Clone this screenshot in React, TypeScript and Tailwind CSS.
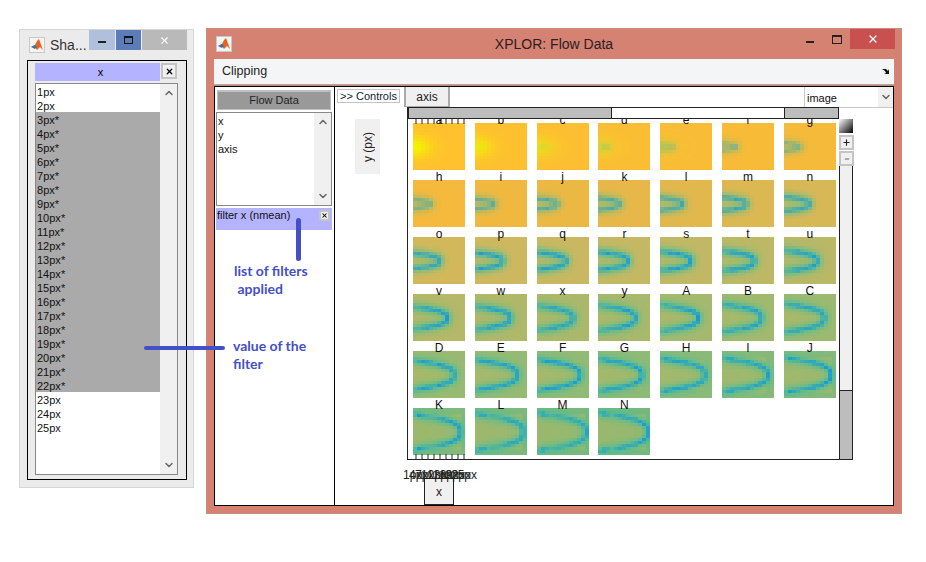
import { useMemo } from 'react'
import { ChevronDown, ChevronUp, Minus, Plus, X } from 'lucide-react'

const rowLabels = Array.from({ length: 25 }, (_, i) => i + 1)
const frameLabels = 'abcdefghijklmnopqrstuvwxyABCDEFGHIJKLMN'.split('')
const tickLabels = ['1px', '4px', '7px', '10px', '13px', '16px', '19px', '22px', '25px']

type Rgb = [number, number, number]

const baseStops: Rgb[] = [
  [255, 193, 45],
  [243, 184, 62],
  [204, 184, 96],
  [172, 184, 106],
  [144, 186, 118],
  [116, 184, 126]
]

function mix(a: Rgb, b: Rgb, k: number): Rgb {
  return [a[0] + (b[0] - a[0]) * k, a[1] + (b[1] - a[1]) * k, a[2] + (b[2] - a[2]) * k]
}

function heatColor(index: number, x: number, y: number): string {
  const t = index / 38
  const pos = t * (baseStops.length - 1)
  const low = Math.min(Math.floor(pos), baseStops.length - 2)
  let color = mix(baseStops[low], baseStops[low + 1], pos - low)

  const tip = 3 + 47 * Math.pow(t, 0.7)
  const half = 1 + 18 * t
  const dy = Math.abs(y - 24)
  let dist = 999
  for (let s = 0; s <= 24; s++) {
    const v = s / 24
    const cx = tip * (1 - v * v * v)
    const cy = half * v
    dist = Math.min(dist, Math.hypot(x - cx, dy - cy))
  }

  // inside of the front stays olive, outside turns green with time
  if (x < tip && dy < half) color = mix(color, [176, 184, 100], Math.min(1, t * 1.4) * 0.6)
  const noise = (Math.sin(x * 12.9 + dy * 78.2 + index * 37.7) * 43758.5) % 1
  const strength = Math.min(1, 0.05 + t * 2.2)
  color = mix(color, [72, 192, 150], Math.exp(-(dist * dist) / 30) * strength * 0.8)
  color = mix(color, [20, 152, 220], Math.exp(-(dist * dist) / 4) * strength * (0.6 + Math.abs(noise) * 0.35))

  if (index < 5) {
    const glow = Math.exp(-((x * x) / 320 + (dy * dy) / 110)) * (1 - index / 5)
    color = mix(color, [244, 244, 0], glow)
  }
  return `rgb(${color.map(Math.round).join(',')})`
}

function HeatThumb({ index }: { index: number }) {
  const cells = useMemo(() => {
    const list: { x: number; y: number; fill: string }[] = []
    for (let x = 0; x < 52; x += 4) {
      for (let y = 0; y < 47; y += 3) {
        list.push({ x, y, fill: heatColor(index, x + 2, y + 1.5) })
      }
    }
    return list
  }, [index])

  return (
    <svg width="52" height="47" viewBox="0 0 52 47" shapeRendering="crispEdges" className="block">
      {cells.map((c) => (
        <rect key={`${c.x}-${c.y}`} x={c.x} y={c.y} width="4" height="3" fill={c.fill} />
      ))}
    </svg>
  )
}

function MatlabIcon() {
  return (
    <div className="flex size-[16px] items-center justify-center border border-[#c8c8c8] bg-[#f4f4f4]">
      <svg width="14" height="14" viewBox="0 0 14 14">
        <path d="M1 9 L5 7 L7 3 L9 1 L13 12 L10 9 L7 12 L5 9 Z" fill="#e8641e" />
        <path d="M1 9 L5 7 L7 9 L5 11 Z" fill="#3a6fb0" />
      </svg>
    </div>
  )
}

function SmallClose({ className }: { className: string }) {
  return (
    <div className={`flex items-center justify-center border-2 border-[#c4c4c4] bg-[#f0f0f0] ${className}`}>
      <X size={9} strokeWidth={3.5} color="#000" />
    </div>
  )
}

function ScrollColumn() {
  return (
    <div className="flex w-[17px] flex-col items-center justify-between bg-[#f0f0f0] py-[3px]">
      <ChevronUp size={12} strokeWidth={3} color="#666" />
      <ChevronDown size={12} strokeWidth={3} color="#666" />
    </div>
  )
}

function FilterWindow() {
  return (
    <div className="absolute left-[19px] top-[29px] h-[459px] w-[175px] border border-[#d6d6d6] bg-[#ebebeb]">
      <div className="flex h-[30px] items-start">
        <div className="ml-[9px] mt-[7px]">
          <MatlabIcon />
        </div>
        <span className="ml-[5px] mt-[6px] w-[39px] text-[14px] leading-[19px] text-[#333]">Sha...</span>
        <div className="flex h-[20px] w-[26px] items-center justify-center bg-[#b0bfdc]">
          <div className="mt-[3px] h-[2px] w-[8px] bg-[#222]" />
        </div>
        <div className="ml-px flex h-[20px] w-[25px] items-center justify-center bg-[#5a7db8]">
          <div className="h-[8px] w-[9px] border border-t-2 border-[#111]" />
        </div>
        <div className="ml-px flex h-[20px] w-[45px] items-center justify-center bg-[#b9b9b9]">
          <X size={11} strokeWidth={2.5} color="#fff" />
        </div>
      </div>
      <div className="ml-[7px] h-[420px] w-[160px] border border-black pl-[7px] pt-[2px]">
        <div className="flex">
          <div className="flex h-[18px] w-[125px] items-center justify-center bg-[#b3b3ff] pl-[6px] text-[11px]">x</div>
          <SmallClose className="ml-px size-[16px]" />
        </div>
        <div className="mt-[2px] flex h-[392px] w-[143px] border border-[#888] bg-white">
          <div className="flex-1 text-[11px] leading-[16px] text-[#111]">
            {rowLabels.map((n) => {
              const active = n >= 3 && n <= 22
              return (
                <div key={n} className={active ? 'h-[14px] bg-[#aaaaaa] pl-px' : 'h-[14px] pl-px'}>
                  {n}px{active ? '*' : ''}
                </div>
              )
            })}
          </div>
          <ScrollColumn />
        </div>
      </div>
    </div>
  )
}

function DataPanel() {
  return (
    <div className="flex w-[120px] flex-col border-r border-black pl-px pr-[2px] pt-[3px]">
      <div className="mx-px flex h-[20px] items-center justify-center border border-t-2 border-[#c0c0c0] bg-[#999] text-[11px] text-[#222]">
        Flow Data
      </div>
      <div className="mt-[2px] flex h-[94px] border border-[#888] bg-white">
        <div className="flex-1 pt-px text-[11px] leading-[14px] text-[#111]">
          <div className="pl-px">x</div>
          <div className="pl-px">y</div>
          <div className="pl-px">axis</div>
        </div>
        <ScrollColumn />
      </div>
      <div className="mt-[2px] flex h-[22px] items-start justify-between bg-[#b3b3ff] px-px pt-[1px] text-[11px] leading-[13px] text-[#111]">
        <span>filter x (nmean)</span>
        <SmallClose className="mr-px mt-px size-[11px]" />
      </div>
    </div>
  )
}

function AxisTicks({ className }: { className: string }) {
  return (
    <svg width="50" height="5" viewBox="0 0 50 5" className={className}>
      <path d="M1 0V5M7 0V5M13 0V5M19 0V5M25 0V5M31 0V5M37 0V5M43 0V5M49 0V5" stroke="#222" strokeWidth="1" />
    </svg>
  )
}

function AxesPanel() {
  return (
    <div className="h-[353px] w-[446px] border-b border-l border-[#222]">
      <div className="relative z-10 flex h-[12px] w-[431px] border border-[#222] bg-[#f0f0f0]">
        <div className="w-[203px] border-r border-[#222] bg-[#bdbdbd]" />
        <div className="w-[172px] bg-white" />
        <div className="flex-1 border-l border-[#222] bg-[#bdbdbd]" />
      </div>
      <div className="flex h-[340px]">
        <div className="relative w-[431px] pl-[5px]">
          <AxisTicks className="absolute left-[7px] top-0" />
          <div className="-mt-[6px] grid grid-cols-[repeat(7,52px)] gap-x-[9.8px] gap-y-[0px]">
            {frameLabels.map((label, i) => (
              <div key={label} className="flex flex-col items-center">
                <div className="relative h-[10px] text-[12px] leading-[14px] text-[#111]">{label}</div>
                <HeatThumb index={i} />
              </div>
            ))}
          </div>
          <AxisTicks className="absolute bottom-0 left-[7px]" />
        </div>
        <div className="flex w-[14px] flex-col">
          <div className="h-[14px] bg-[linear-gradient(135deg,#ffffff,#000000)]" />
          <div className="mt-[2px] flex h-[15px] w-[15px] items-center justify-center border-2 border-[#c4c4c4] bg-[#f0f0f0]">
            <Plus size={9} strokeWidth={3} color="#223" />
          </div>
          <div className="mt-px flex h-[15px] w-[15px] items-center justify-center border-2 border-[#c4c4c4] bg-[#f0f0f0]">
            <Minus size={6} strokeWidth={3} color="#333" />
          </div>
          <div className="flex-1 border-x border-[#222] bg-[#f0f0f0]" />
          <div className="h-[69px] border-x border-t border-[#222] bg-[#bdbdbd]" />
        </div>
      </div>
    </div>
  )
}

function PlotPane() {
  return (
    <div className="flex flex-1 flex-col">
      <div className="flex h-[20px] items-start">
        <div className="ml-[2px] mt-[2px] flex h-[14px] w-[63px] items-center justify-center border border-[#c4c4c4] bg-white text-[11px] text-[#123]">
          &gt;&gt; Controls
        </div>
        <div className="ml-[4px] flex h-[20px] w-[46px] items-center justify-center border-x-2 border-b border-[#aaa] bg-[#f0f0f0] text-[12px] text-[#222]">
          axis
        </div>
        <div className="ml-[354px] flex h-[21px] flex-1 border-b border-l border-[#c8c8c8]">
          <span className="flex-1 pl-[2px] pt-[4px] text-[11px] leading-[14px] text-[#111]">image</span>
          <div className="flex w-[15px] items-center justify-center bg-[#f0f0f0]">
            <ChevronDown size={12} strokeWidth={3} color="#666" />
          </div>
        </div>
      </div>
      <div className="flex">
        <div className="w-[72px] pl-[20px] pt-[12px]">
          <div className="flex h-[55px] w-[25px] items-center justify-center bg-[#f0f0f0]">
            <span className="rotate-180 text-[12px] text-[#222] [writing-mode:vertical-rl]">y (px)</span>
          </div>
        </div>
        <AxesPanel />
      </div>
      <div className="relative h-[14px] w-[150px]">
        {tickLabels.map((label, i) => (
          <span
            key={label}
            className="absolute top-[8px] text-[12px] leading-[14px] text-[#222]"
            style={{ left: 68 + i * 6 }}
          >
            {label}
          </span>
        ))}
      </div>
      <div className="ml-[89px] mt-[4px] flex h-[27px] w-[30px] items-center justify-center border border-[#222] bg-[#f0f0f0] text-[12px] text-[#222]">
        x
      </div>
    </div>
  )
}

function FlowWindow() {
  return (
    <div className="absolute left-[206px] top-[28px] flex h-[486px] w-[696px] flex-col border border-[#c98d80] bg-[#d58273] px-[7px]">
      <div className="relative flex h-[30px] items-start">
        <div className="ml-[2px] mt-[7px]">
          <MatlabIcon />
        </div>
        <span className="absolute left-0 right-0 top-[5px] text-center text-[14px] leading-[20px] text-[#2a2020]">
          XPLOR: Flow Data
        </span>
        <div className="ml-auto mr-[-1px] flex items-start">
          <div className="mt-[12px] h-[2px] w-[8px] bg-[#222]" />
          <div className="ml-[18px] mt-[6px] h-[9px] w-[10px] border border-t-2 border-[#222]" />
          <div className="ml-[8px] flex h-[20px] w-[45px] items-center justify-center bg-[#c8504f]">
            <X size={12} strokeWidth={2.5} color="#fff" />
          </div>
        </div>
      </div>
      <div className="flex h-[26px] items-center justify-between border-b border-[#aaa] bg-[#f3f5f7] pl-[8px] pr-[4px] text-[12.5px] text-[#222]">
        <span>Clipping</span>
        <svg width="8" height="7" viewBox="0 0 8 7">
          <path d="M0 1 L4 1 L6 3 L7 1 L7 6 L2 6 L4 5 L3 3 Z" fill="#111" />
        </svg>
      </div>
      <div className="mt-px flex h-[420px] border border-black bg-white">
        <DataPanel />
        <PlotPane />
      </div>
    </div>
  )
}

export default function App() {
  return (
    <div className="relative h-[562px] w-[926px] overflow-hidden bg-white font-['Liberation_Sans',sans-serif]">
      <FilterWindow />
      <FlowWindow />
      <div className="absolute left-[296px] top-[218px] h-[43px] w-[5px] rounded-full bg-[#4350c8]" />
      <div className="absolute left-[144px] top-[346px] h-[4px] w-[81px] rounded-full bg-[#4350c8]" />
      <div className="absolute left-[234px] top-[262px] w-[90px] font-['Lato',sans-serif] text-[14px] font-bold leading-[18px] text-[#4350c8]">
        list of filters
        <br />
        &nbsp;applied
      </div>
      <div className="absolute left-[233px] top-[337px] w-[90px] font-['Lato',sans-serif] text-[14px] font-bold leading-[18px] text-[#4350c8]">
        value of the
        <br />
        filter
      </div>
    </div>
  )
}
